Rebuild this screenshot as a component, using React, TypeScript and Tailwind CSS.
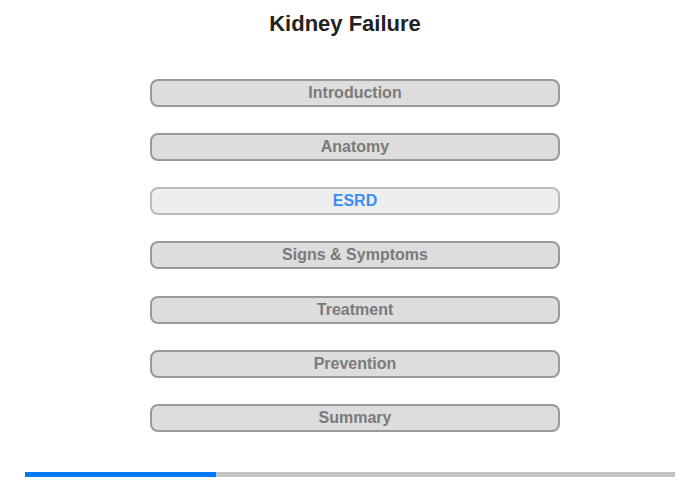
import React from "react";

const items = ["Introduction", "Anatomy", "ESRD", "Signs & Symptoms", "Treatment", "Prevention", "Summary"];

export default function App() {
  return (
    <div className="w-[700px] h-[480px] bg-white flex flex-col" style={{ fontFamily: '"Liberation Sans", Arial, sans-serif' }}>
      <h1 className="mt-[11px] pr-[10px] text-center text-[22px] leading-[25px] font-bold text-[#222222]">Kidney Failure</h1>
      <div className="mt-[43px] pl-[150px] flex flex-col items-start gap-[26.17px]">
        {items.map((t) => {
          const active = t === "ESRD";
          return (
            <div
              key={t}
              className={
                active
                  ? "w-[410px] h-[28px] rounded-[8px] border-2 border-[#bbbbbb] bg-[#eeeeee] flex items-center justify-center text-[16px] font-bold text-[#3b8ef0]"
                  : "w-[410px] h-[28px] rounded-[8px] border-2 border-[#999999] bg-[#dddddd] flex items-center justify-center text-[16px] font-bold text-[#7a7a7a]"
              }
            >
              {t}
            </div>
          );
        })}
      </div>
      <div className="mt-[40px] mx-[25px] h-[5px] bg-[#c3c3c3] flex">
        <div className="w-[191px] h-full bg-[#007bff]" />
      </div>
    </div>
  );
}
